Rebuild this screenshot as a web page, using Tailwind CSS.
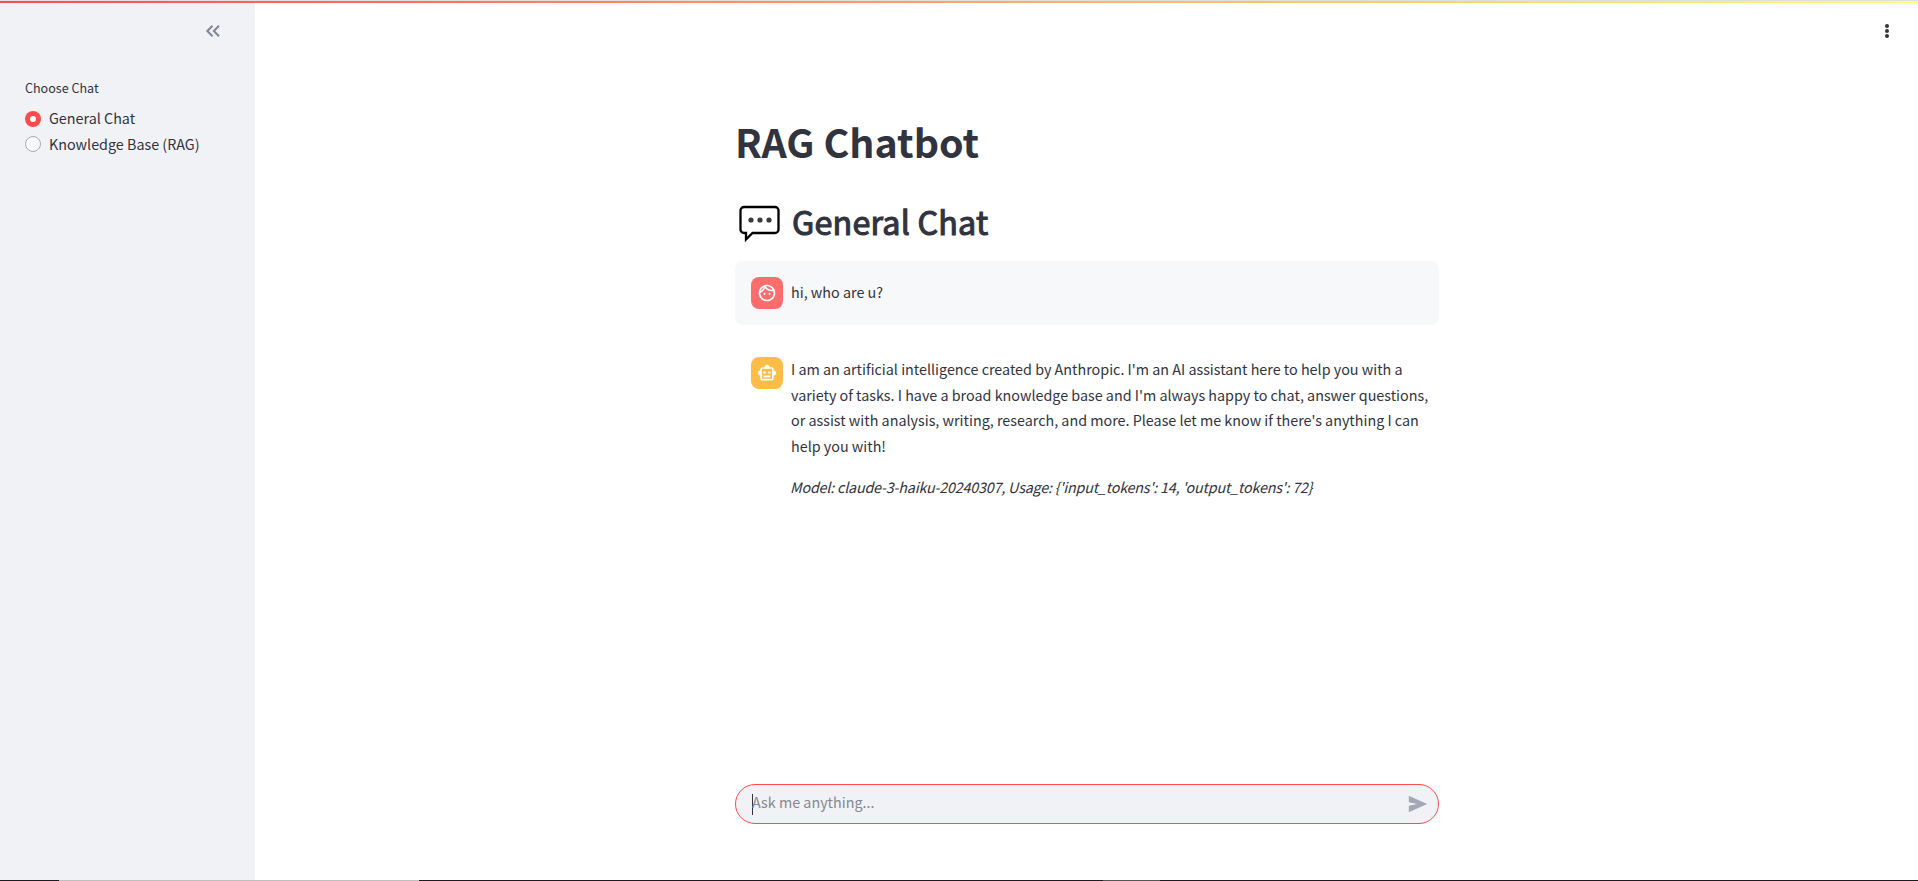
<!DOCTYPE html>
<html lang="en">
<head>
<meta charset="utf-8">
<title>RAG Chatbot</title>
<script src="https://cdn.jsdelivr.net/npm/@tailwindcss/browser@4"></script>
</head>
<body class="relative flex h-[881px] w-[1918px] flex-col overflow-hidden bg-white font-['Noto_Sans_CJK_SC',sans-serif] text-[14.34px] leading-[25.6px] text-[#31333f]">
<div class="h-px shrink-0 bg-[#e0e0e0]"></div>
<div class="h-0.5 shrink-0 bg-linear-to-r/srgb from-[#ff4b4b] to-[#fffd80]"></div>
<div class="flex min-h-0 flex-1">
  <aside class="w-[255px] shrink-0 bg-[#f0f2f6]">
    <div class="flex h-[75px] justify-end pt-4 pr-[30px]">
      <svg class="size-6" viewBox="0 0 24 24" fill="none" stroke="#808495" stroke-width="2"><path d="M11.5 6.700 6.300 12l5.200 5.300M18 6.700 12.800 12l5.200 5.300"/></svg>
    </div>
    <div class="flex flex-col pl-[25px]">
      <div class="h-[21px] text-[12.55px] leading-[20px]">Choose Chat</div>
      <label class="mt-[7px] flex h-[25px] items-center gap-2"><span class="flex size-4 items-center justify-center rounded-full bg-[#ff4b4b]"><span class="size-1.5 rounded-full bg-white"></span></span><span class="-translate-y-px">General Chat</span></label>
      <label class="flex h-[26px] items-center gap-2"><span class="size-4 rounded-full border border-[#a8abb3] bg-[#f9f9fb]"></span><span>Knowledge Base (RAG)</span></label>
    </div>
  </aside>
  <main class="relative flex flex-1 flex-col">
    <svg class="absolute top-[15px] right-[19px] size-6" viewBox="0 0 24 24" fill="#31333f"><circle cx="12" cy="8" r="2"/><circle cx="12" cy="13" r="2"/><circle cx="12" cy="18" r="2"/></svg>
    <div class="ml-[480px] flex w-[704px] flex-1 flex-col pt-[111px]">
      <h1 class="h-[53px] text-[39.4px] leading-[53px] font-bold">RAG Chatbot</h1>
      <h2 class="mt-[33px] flex h-[43px] items-center text-[32.3px] leading-[43px] font-normal tracking-[0.18px] [-webkit-text-stroke:1.1px_#31333f]">
        <svg class="mt-[5px] mr-[11px] ml-1 h-[38px] w-[42px] shrink-0" viewBox="0 0 42 38"><path d="M5 2h31a3.500 3.500 0 0 1 3.500 3.500v19a3.500 3.500 0 0 1-3.500 3.500H13.500L7 34.500V28H5a3.500 3.500 0 0 1-3.500-3.500v-19A3.500 3.500 0 0 1 5 2z" fill="#fff" stroke="#000" stroke-width="2.300"/><g fill="#3a3a3a"><circle cx="12" cy="15" r="2.600"/><circle cx="21" cy="15" r="2.600"/><circle cx="30" cy="15" r="2.600"/></g></svg>
        <span>General Chat</span>
      </h2>
      <div class="mt-[18px] flex h-16 gap-2 rounded-lg bg-[#f7f8fa] p-4">
        <div class="flex size-8 shrink-0 items-center justify-center rounded-lg bg-[#ff6c6c]">
          <svg class="size-5" viewBox="0 0 24 24" fill="#fff"><path d="M10.250 13c0 .69-.56 1.250-1.250 1.250S7.750 13.690 7.750 13s.56-1.250 1.250-1.250 1.250.56 1.250 1.250zM15 11.750c-.69 0-1.250.56-1.250 1.250s.56 1.250 1.250 1.250 1.250-.56 1.250-1.250-.56-1.250-1.250-1.250zm7 .25c0 5.520-4.480 10-10 10S2 17.520 2 12 6.480 2 12 2s10 4.480 10 10zM10.660 4.120C12.060 6.440 14.600 8 17.500 8c.46 0 .91-.05 1.340-.12C17.440 5.560 14.900 4 12 4c-.46 0-.91.05-1.340.12zM4.420 9.470c1.710-.97 3.030-2.550 3.660-4.440C6.370 6 5.050 7.580 4.420 9.470zM20 12c0-.78-.12-1.530-.33-2.240-.7.150-1.420.24-2.170.24-3.130 0-5.920-1.440-7.760-3.690C8.690 8.870 6.600 10.880 4 11.860c.01.04 0 .09 0 .14 0 4.410 3.590 8 8 8s8-3.590 8-8z"/></svg>
        </div>
        <p class="pt-[2px]">hi, who are u?</p>
      </div>
      <div class="mt-4 flex gap-2 p-4">
        <div class="flex size-8 shrink-0 items-center justify-center rounded-lg bg-[#ffbd45]">
          <svg class="size-5" viewBox="0 0 24 24" fill="#fff"><path d="M20 9V7c0-1.100-.9-2-2-2h-3c0-1.660-1.340-3-3-3S9 3.340 9 5H6c-1.100 0-2 .9-2 2v2c-1.660 0-3 1.340-3 3s1.340 3 3 3v4c0 1.100.9 2 2 2h12c1.100 0 2-.9 2-2v-4c1.660 0 3-1.340 3-3s-1.340-3-3-3zm-2 10H6V7h12v12zm-9-6c-.83 0-1.500-.67-1.500-1.500S8.170 10 9 10s1.500.67 1.500 1.500S9.830 13 9 13zm7.500-1.500c0 .83-.67 1.500-1.500 1.500s-1.500-.67-1.500-1.500.67-1.500 1.500-1.500 1.500.67 1.500 1.500zM8 15h8v2H8v-2z"/></svg>
        </div>
        <div class="-mt-px whitespace-nowrap">
          <p>I am an artificial intelligence created by Anthropic. I'm an AI assistant here to help you with a<br>variety of tasks. I have a broad knowledge base and I'm always happy to chat, answer questions,<br>or assist with analysis, writing, research, and more. Please let me know if there's anything I can<br>help you with!</p>
          <p class="mt-4 -ml-px tracking-[-0.195px] italic">Model: claude-3-haiku-20240307, Usage: {'input_tokens': 14, 'output_tokens': 72}</p>
        </div>
      </div>
      <div class="mt-auto mb-[57px] flex h-10 items-center rounded-full border border-[#ff4b4b] bg-[#f0f2f6] pr-[9px] pl-4">
        <div class="h-[21px] w-px bg-[#31333f]"></div>
        <div class="-ml-px flex-1 -translate-y-[2px] text-[#858891]">Ask me anything...</div>
        <svg class="size-[22px]" viewBox="0 0 24 24" fill="#a3a8b8"><path d="M2 21 22 12 2 3v7l9 2-9 2z"/></svg>
      </div>
    </div>
  </main>
</div>
<div class="absolute bottom-0 left-0 flex h-px w-full bg-[#1f1a20]"><div class="ml-[59px] w-[360px] bg-[#c0c0c0]"></div><div class="ml-[684px] w-[57px] bg-[#555]"></div></div>
</body>
</html>
